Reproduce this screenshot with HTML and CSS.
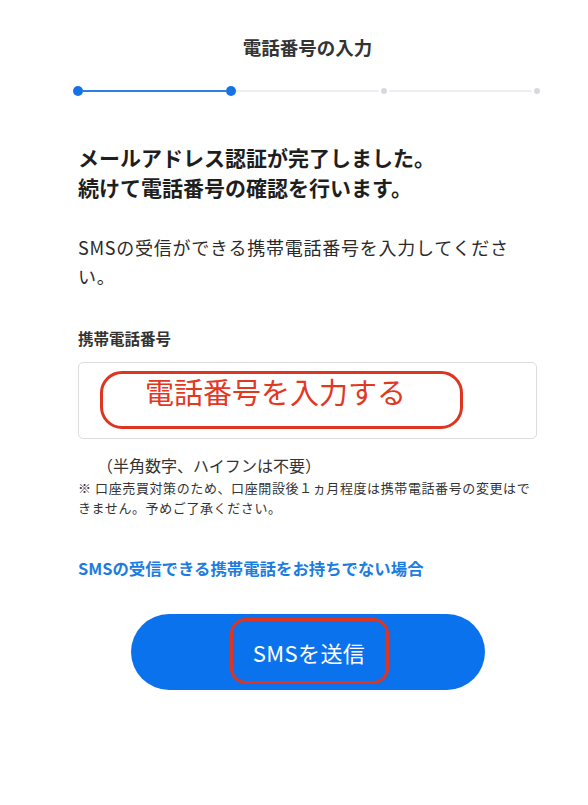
FILE: index.html
```html
<!DOCTYPE html>
<html lang="ja">
<head>
<meta charset="utf-8">
<title>電話番号の入力</title>
<link rel="stylesheet" href="styles.css">
</head>
<body>
<main class="page">
  <h1 class="title">電話番号の入力</h1>
  <div class="progress">
    <span class="dot dot-on"></span>
    <span class="seg seg-on"></span>
    <span class="dot dot-on"></span>
    <span class="seg"></span>
    <span class="dot"></span>
    <span class="seg"></span>
    <span class="dot"></span>
  </div>
  <h2 class="heading">メールアドレス認証が完了しました。<br>続けて電話番号の確認を行います。</h2>
  <p class="lead">SMSの受信ができる携帯電話番号を入力してください。</p>
  <label class="label">携帯電話番号</label>
  <div class="input">
    <div class="mark mark-input">電話番号を入力する</div>
  </div>
  <p class="note">（半角数字、ハイフンは不要）</p>
  <p class="small">※ 口座売買対策のため、口座開設後１ヵ月程度は携帯電話番号の変更はできません。予めご了承ください。</p>
  <a class="link" href="#">SMSの受信できる携帯電話をお持ちでない場合</a>
  <div class="btn-wrap">
    <button class="btn"><span class="mark mark-btn">SMSを送信</span></button>
  </div>
</main>
</body>
</html>
```
FILE: styles.css
```css
* { box-sizing: border-box; }
html, body { margin: 0; padding: 0; background: #fff; }
body {
  font-family: "Noto Sans CJK JP", "Noto Sans", sans-serif;
  color: #222;
}
.page {
  padding: 35px 51px 0 78px;
  display: flex;
  flex-direction: column;
}
.title {
  margin: 0;
  text-align: center;
  font-size: 18.5px;
  line-height: 24px;
  font-weight: 700;
  color: #333;
}
.progress {
  margin: 27px -5px 0 -5px;
  height: 10px;
  display: flex;
  align-items: center;
}
.dot {
  width: 6px;
  height: 6px;
  border-radius: 50%;
  background: #d6d9e0;
  flex: none;
  margin: 0 2px;
}
.dot-on {
  width: 10px;
  height: 10px;
  margin: 0;
  background: #1672e6;
}
.seg {
  flex: 1;
  height: 2px;
  background: #eceef2;
}
.seg-on { background: #2f7fe0; }
.heading {
  margin: 46px 0 0;
  font-size: 21px;
  line-height: 30px;
  font-weight: 700;
  color: #1e1e1e;
}
.lead {
  margin: 31px 0 0;
  font-size: 18px;
  line-height: 29px;
  letter-spacing: 0.75px;
  color: #2a2a2a;
}
.label {
  margin-top: 36px;
  font-size: 15.5px;
  line-height: 22px;
  font-weight: 700;
  color: #333;
}
.input {
  margin-top: 13px;
  height: 77px;
  border: 1px solid #dcdde0;
  border-radius: 5px;
  padding: 8px 0 0 21px;
}
.mark {
  border: 3px solid #df3420;
  color: #e2381f;
}
.mark-input {
  width: 363px;
  height: 58px;
  border-radius: 22px;
  font-size: 29px;
  line-height: 30px;
  padding: 2px 0 0 42px;
}
.note {
  margin: 15px 0 0;
  padding-left: 19px;
  font-size: 16px;
  line-height: 22px;
  color: #333;
}
.small {
  margin: 2px 0 0;
  font-size: 13px;
  line-height: 19.5px;
  letter-spacing: 0.6px;
  color: #333;
}
.link {
  margin-top: 39px;
  font-size: 16.4px;
  line-height: 24px;
  font-weight: 700;
  color: #1a7ddf;
  text-decoration: none;
}
.btn-wrap {
  margin-top: 34px;
  display: flex;
  justify-content: center;
}
.btn {
  width: 354px;
  height: 76px;
  border: none;
  border-radius: 38px;
  background: #0b72ee;
  display: flex;
  align-items: center;
  justify-content: center;
  padding: 0;
  font-family: inherit;
}
.mark-btn {
  width: 159px;
  height: 66px;
  border-radius: 16px;
  display: flex;
  align-items: center;
  justify-content: center;
  color: #fff;
  font-size: 22px;
  letter-spacing: 0.4px;
  padding-top: 2px;
  margin-top: -2px;
  margin-left: 3px;
}
```
